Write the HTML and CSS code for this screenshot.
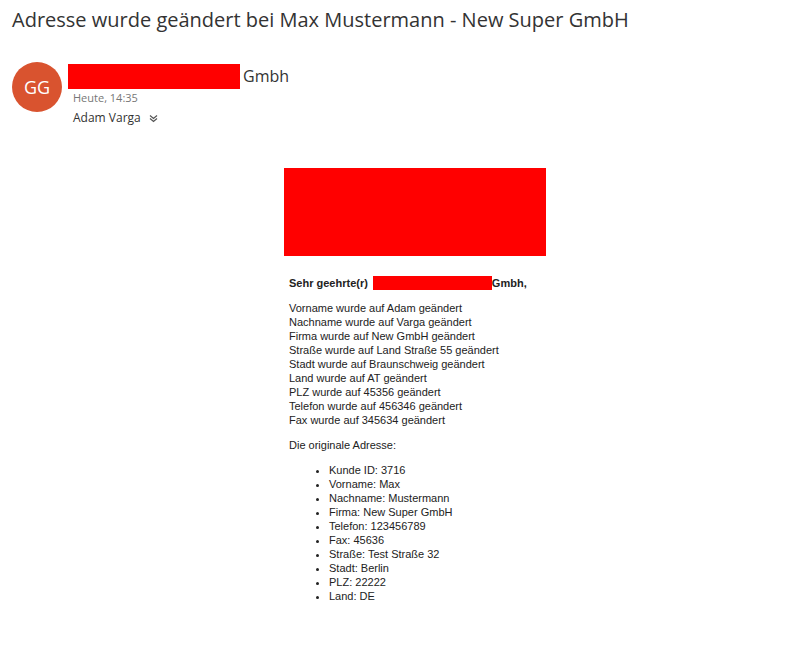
FILE: index.html
```html
<!DOCTYPE html>
<html>
<head>
<meta charset="utf-8">
<link rel="stylesheet" href="styles.css">
</head>
<body>
<div class="reader">
  <h1 class="subject">Adresse wurde geändert bei Max Mustermann - New Super GmbH</h1>
  <div class="sender">
    <div class="avatar">GG</div>
    <div class="meta">
      <div class="from"><span class="redact redact-from"></span><span class="from-name">Gmbh</span></div>
      <div class="date">Heute, 14:35</div>
      <div class="to">Adam Varga
        <svg class="chev" width="9" height="9" viewBox="0 0 9 9"><path d="M1 1.5 L4.5 4.5 L8 1.5 M1 4.5 L4.5 7.5 L8 4.5" fill="none" stroke="#555" stroke-width="1.2"/></svg>
      </div>
    </div>
  </div>
  <div class="mail">
    <div class="logo"></div>
    <div class="mail-text">
      <p class="greet">Sehr geehrte(r) <span class="redact redact-greet"></span>Gmbh,</p>
      <p>Vorname wurde auf Adam geändert<br>Nachname wurde auf Varga geändert<br>Firma wurde auf New GmbH geändert<br>Straße wurde auf Land Straße 55 geändert<br>Stadt wurde auf Braunschweig geändert<br>Land wurde auf AT geändert<br>PLZ wurde auf 45356 geändert<br>Telefon wurde auf 456346 geändert<br>Fax wurde auf 345634 geändert</p>
      <p>Die originale Adresse:</p>
      <ul>
        <li>Kunde ID: 3716</li>
        <li>Vorname: Max</li>
        <li>Nachname: Mustermann</li>
        <li>Firma: New Super GmbH</li>
        <li>Telefon: 123456789</li>
        <li>Fax: 45636</li>
        <li>Straße: Test Straße 32</li>
        <li>Stadt: Berlin</li>
        <li>PLZ: 22222</li>
        <li>Land: DE</li>
      </ul>
    </div>
  </div>
</div>
</body>
</html>
```
FILE: styles.css
```css
html, body { margin: 0; padding: 0; background: #fff; }
body { font-family: "Open Sans", "Noto Sans", sans-serif; color: #333; }
.reader { padding: 6px 0 0 12px; }
.subject { margin: 0; font-size: 20px; font-weight: 400; line-height: 28px; color: #333; letter-spacing: 0; }
.sender { display: flex; margin-top: 28px; }
.avatar { width: 50px; height: 50px; border-radius: 50%; background: #d9532f; color: #fff; font-size: 18px; display: flex; align-items: center; justify-content: center; flex: none; }
.meta { margin-left: 6px; padding-top: 1px; }
.from { display: flex; align-items: center; height: 26px; }
.redact { display: inline-block; background: #ff0000; }
.redact-from { width: 172px; height: 25px; }
.from-name { font-size: 16px; margin-left: 3px; color: #333; }
.date { font-size: 11px; color: #777; margin-left: 5px; margin-top: 1px; line-height: 16px; }
.to { font-size: 12px; color: #333; margin-left: 5px; margin-top: 3px; line-height: 18px; display: flex; align-items: center; }
.chev { margin-left: 8px; }
.mail { width: 262px; margin: 41px 0 0 272px; font-family: "Liberation Sans", Arial, sans-serif; font-size: 11px; line-height: 14px; color: #222; }
.logo { height: 88px; background: #ff0000; }
.mail-text { padding: 0 5px; }
.mail-text p { margin: 11px 0 0; }
.greet { font-weight: 700; margin-top: 20px !important; display: flex; align-items: center; white-space: nowrap; }
.redact-greet { width: 119px; height: 14px; margin-left: 5px; }
ul { margin: 11px 0 0; padding-left: 40px; }
li { line-height: 14px; }
```
